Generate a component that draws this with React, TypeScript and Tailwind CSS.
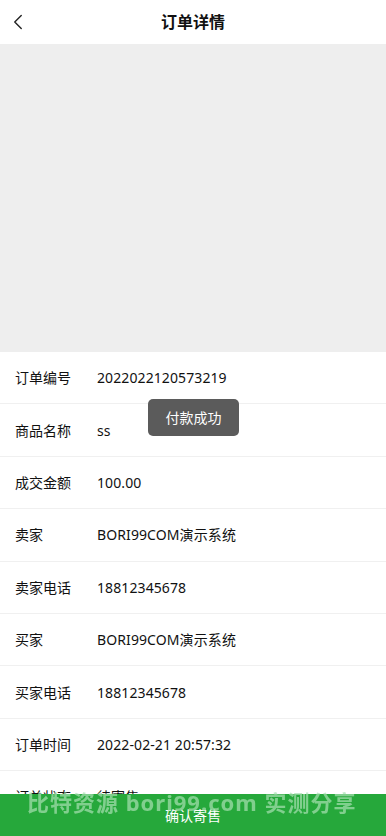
import { ChevronLeft } from "lucide-react";

const rows = [
  { label: "订单编号", value: "2022022120573219" },
  { label: "商品名称", value: "ss" },
  { label: "成交金额", value: "100.00" },
  { label: "卖家", value: "BORI99COM演示系统" },
  { label: "卖家电话", value: "18812345678" },
  { label: "买家", value: "BORI99COM演示系统" },
  { label: "买家电话", value: "18812345678" },
  { label: "订单时间", value: "2022-02-21 20:57:32" },
  { label: "订单状态", value: "待寄售" },
];

export default function App() {
  return (
    <div
      className="relative w-[386px] min-h-[836px] bg-white text-[#111]"
      style={{ fontFamily: '"Noto Sans", "Noto Sans CJK SC", sans-serif' }}>
      {/* ===== HEADER ===== */}
      <div className="relative flex h-[44px] items-center justify-center bg-white">
        <ChevronLeft
          className="absolute left-[5px] top-[9px] h-[26px] w-[26px] text-[#222]"
          strokeWidth={1.3}
        />
        <h1 className="text-[16px] font-bold">订单详情</h1>
      </div>

      {/* ===== COVER ===== */}
      <div className="h-[308px] bg-[#eeeeee]" />

      {/* ===== INFO ROWS ===== */}
      <div className="flex flex-col">
        {rows.map((r) => (
          <div
            key={r.label}
            className="flex h-[52.4px] items-center border-b border-[#f0f0f0] px-[15px] text-[14px]">
            <span className="w-[82px] shrink-0">{r.label}</span>
            <span className="tracking-[0.1px]">{r.value}</span>
          </div>
        ))}
      </div>

      {/* ===== TOAST ===== */}
      <div className="absolute left-[148px] top-[399px] flex h-[37px] w-[91px] items-center justify-center rounded-[5px] bg-[#5b5b5b] text-[14px] text-white">
        付款成功
      </div>

      {/* ===== BOTTOM BAR ===== */}
      <div className="fixed bottom-0 left-0 flex h-[42px] w-[386px] items-center justify-center bg-[#26a83b] text-[14px] text-white">
        确认寄售
      </div>

      {/* watermark */}
      <div className="pointer-events-none fixed left-[27px] top-[786px] whitespace-nowrap text-[22px] font-bold tracking-[1px] text-[#a8e0b2]/70">
        比特资源 bori99.com 实测分享
      </div>
    </div>
  );
}
